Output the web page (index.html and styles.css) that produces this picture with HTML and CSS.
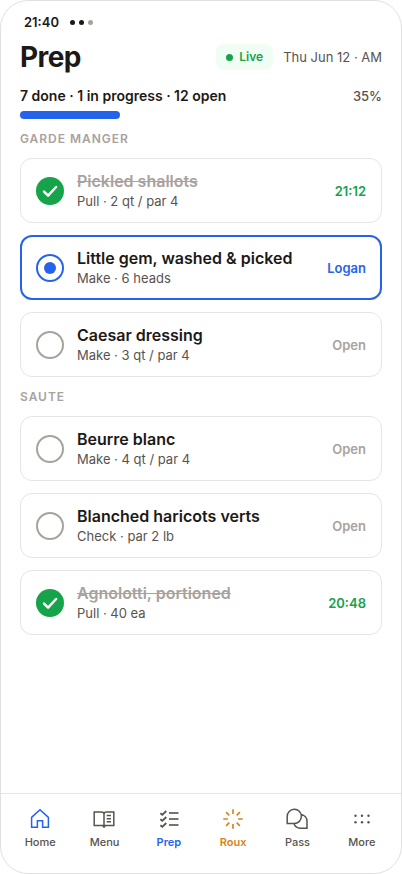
FILE: index.html
```html
<!DOCTYPE html>
<html lang="en">
<head>
<meta charset="utf-8">
<meta name="viewport" content="width=device-width, initial-scale=1">
<title>Prep</title>
<link rel="stylesheet" href="styles.css">
</head>
<body>
<div class="screen">
  <div class="statusbar">
    <span>21:40</span>
    <span class="signal"><i></i><i></i><i class="off"></i></span>
  </div>
  <main class="content">
    <header class="header">
      <h1>Prep</h1>
      <span class="live">Live</span>
      <span class="shift">Thu Jun 12 · AM</span>
    </header>
    <div class="summary">
      <span class="counts">7 done · 1 in progress · 12 open</span>
      <span class="percent">35%</span>
    </div>
    <div class="progress"></div>

    <h2>Garde manger</h2>
    <label class="task done">
      <input type="checkbox" checked>
      <span class="info"><span class="name">Pickled shallots</span><span class="detail">Pull · 2 qt / par 4</span></span>
      <span class="state">21:12</span>
    </label>
    <label class="task active">
      <input type="checkbox">
      <span class="info"><span class="name">Little gem, washed &amp; picked</span><span class="detail">Make · 6 heads</span></span>
      <span class="state">Logan</span>
    </label>
    <label class="task">
      <input type="checkbox">
      <span class="info"><span class="name">Caesar dressing</span><span class="detail">Make · 3 qt / par 4</span></span>
      <span class="state">Open</span>
    </label>

    <h2>Saute</h2>
    <label class="task">
      <input type="checkbox">
      <span class="info"><span class="name">Beurre blanc</span><span class="detail">Make · 4 qt / par 4</span></span>
      <span class="state">Open</span>
    </label>
    <label class="task">
      <input type="checkbox">
      <span class="info"><span class="name">Blanched haricots verts</span><span class="detail">Check · par 2 lb</span></span>
      <span class="state">Open</span>
    </label>
    <label class="task done">
      <input type="checkbox" checked>
      <span class="info"><span class="name">Agnolotti, portioned</span><span class="detail">Pull · 40 ea</span></span>
      <span class="state">20:48</span>
    </label>
  </main>
  <nav class="tabs">
    <a href="#home">
      <svg class="blue" viewBox="0 0 22 22"><path d="M2.6 9.4 11 1.7l8.4 7.7v9.9h-5.8v-6.5H8.4v6.5H2.6z"/></svg>
      <span>Home</span>
    </a>
    <a href="#menu">
      <svg viewBox="0 0 22 22"><path d="M11 17.5H1.2V4h7.2c1.6 0 2.6.9 2.6 2.2v12.6V6.2C11 4.9 12 4 13.6 4h7.2v13.5H11M9.8 17.8 11 19.2l1.2-1.4M13.7 7.6H18M13.7 10.7H18M13.7 13.8H18"/></svg>
      <span>Menu</span>
    </a>
    <a href="#prep" class="current" aria-current="page">
      <svg viewBox="0 0 22 22"><path class="ticks" d="m2.4 5.2 1.9 1.6 4-3.8M2.4 11.2l1.9 1.6 4-3.8M2.4 17.2l1.9 1.6 4-3.8"/><path class="lines" d="M11 5h9.5M11 11h9.5M11 17h9.5"/></svg>
      <span>Prep</span>
    </a>
    <a href="#roux" class="roux">
      <svg viewBox="0 0 22 22"><path d="M11 1.3v4.6M11 16.1v4.6M1.3 11h4.6M16.1 11h4.6M4.1 4.1l3.2 3.2M14.7 14.7l3.2 3.2M4.1 17.9l3.2-3.2M14.7 7.3l3.2-3.2"/></svg>
      <span>Roux</span>
    </a>
    <a href="#pass">
      <svg viewBox="0 0 22 22"><path d="M1.2 15.5V8.6a7.1 7.1 0 1 1 7.1 6.9zM15.2 6.4a7 7 0 0 1 5.8 6.9v7h-6.8a6.8 6.8 0 0 1-6.3-4.7"/></svg>
      <span>Pass</span>
    </a>
    <a href="#more">
      <svg class="dots" viewBox="0 0 22 22"><circle cx="4.5" cy="7.8" r="1.2"/><circle cx="11" cy="7.8" r="1.2"/><circle cx="17.5" cy="7.8" r="1.2"/><circle cx="4.5" cy="14.2" r="1.2"/><circle cx="11" cy="14.2" r="1.2"/><circle cx="17.5" cy="14.2" r="1.2"/></svg>
      <span>More</span>
    </a>
  </nav>
</div>
</body>
</html>
```
FILE: styles.css
```css
:root {
  --ink: #1c1917;
  --muted: #57534e;
  --faint: #a8a29e;
  --line: #e5e5e5;
  --blue: #2563eb;
  --green: #16a34a;
  --amber: #d98324;
}

* { box-sizing: border-box; }

body {
  margin: 0;
  background: #fff;
  color: var(--ink);
  font-family: Inter, "Liberation Sans", sans-serif;
  font-size: 13px;
  line-height: 16px;
}

.screen {
  display: flex;
  flex-direction: column;
  min-height: 100vh;
  border: 1px solid #e0e0e0;
  border-radius: 28px;
  overflow: hidden;
}

.statusbar {
  display: flex;
  align-items: center;
  gap: 11px;
  padding: 13px 23px 0;
  font-weight: 600;
}

.signal { display: flex; gap: 4px; }

.signal i {
  width: 5px;
  height: 5px;
  border-radius: 50%;
  background: var(--ink);
}

.signal .off { background: var(--faint); }

.content {
  display: flex;
  flex: 1;
  flex-direction: column;
  gap: 12px;
  padding: 9px 19px 24px;
}

.header {
  display: flex;
  align-items: center;
  gap: 10px;
}

h1 {
  flex: 1;
  margin: 0;
  font-size: 28px;
  font-weight: 700;
  line-height: 36px;
  letter-spacing: -0.02em;
}

.live {
  display: flex;
  align-items: center;
  gap: 6px;
  padding: 5px 10px;
  border-radius: 8px;
  background: #f0fdf4;
  color: var(--green);
  font-size: 12px;
  font-weight: 600;
}

.live::before {
  content: "";
  width: 7px;
  height: 7px;
  border-radius: 50%;
  background: currentColor;
}

.shift { color: var(--muted); }

.summary {
  display: flex;
  justify-content: space-between;
  margin-bottom: -6px;
  line-height: 18px;
}

.counts {
  font-size: 14px;
  font-weight: 600;
}

.percent {
  color: var(--muted);
  font-weight: 500;
}

.progress {
  width: 100px;
  height: 8px;
  border-radius: 4px;
  background: var(--blue);
}

h2 {
  margin: 0;
  color: var(--faint);
  font-size: 12px;
  font-weight: 600;
  line-height: 15px;
  letter-spacing: 0.08em;
  text-transform: uppercase;
}

.task {
  display: flex;
  align-items: center;
  gap: 13px;
  min-height: 65px;
  padding: 0 15px;
  border: 1px solid var(--line);
  border-radius: 12px;
}

.task input {
  display: grid;
  place-content: center;
  width: 28px;
  height: 28px;
  margin: 0;
  border: 2px solid var(--faint);
  border-radius: 50%;
  appearance: none;
}

.info {
  display: flex;
  flex: 1;
  flex-direction: column;
  padding-bottom: 1px;
}

.name {
  font-size: 16px;
  font-weight: 600;
  line-height: 22px;
}

.detail {
  color: var(--muted);
  line-height: 18px;
}

.state {
  color: var(--faint);
  font-weight: 600;
}

.done .name {
  color: var(--faint);
  text-decoration: line-through;
}

.done .state { color: var(--green); }

.done input {
  border: 0;
  background: var(--green) url("data:image/svg+xml,%3Csvg xmlns='http://www.w3.org/2000/svg' viewBox='0 0 28 28'%3E%3Cpath d='M8 14.6l4.1 4 8-8.6' fill='none' stroke='%23fff' stroke-width='2.5' stroke-linecap='round' stroke-linejoin='round'/%3E%3C/svg%3E");
}

.active {
  padding: 0 14px;
  border: 2px solid var(--blue);
}

.active .state { color: var(--blue); }

.active input { border-color: var(--blue); }

.active input::before {
  content: "";
  width: 12px;
  height: 12px;
  border-radius: 50%;
  background: var(--blue);
}

.tabs {
  display: grid;
  grid-template-columns: repeat(6, 1fr);
  padding: 14px 7px 23px;
  border-top: 1px solid var(--line);
}

.tabs a {
  display: flex;
  flex-direction: column;
  align-items: center;
  gap: 4px;
  color: var(--muted);
  font-size: 11px;
  font-weight: 500;
  text-decoration: none;
}

.tabs svg {
  width: 22px;
  height: 22px;
  fill: none;
  stroke: var(--muted);
  stroke-width: 1.5;
}

.tabs .ticks { stroke-width: 1.8; }

.tabs .lines {
  stroke: #78716c;
  stroke-width: 1.8;
}

.tabs .blue { stroke: var(--blue); }

.tabs .dots {
  fill: var(--muted);
  stroke: none;
}

.tabs .current {
  color: var(--blue);
  font-weight: 600;
}

.tabs .roux {
  color: var(--amber);
  font-weight: 600;
}

.tabs .roux svg {
  stroke: var(--amber);
  stroke-width: 1.7;
}
```
